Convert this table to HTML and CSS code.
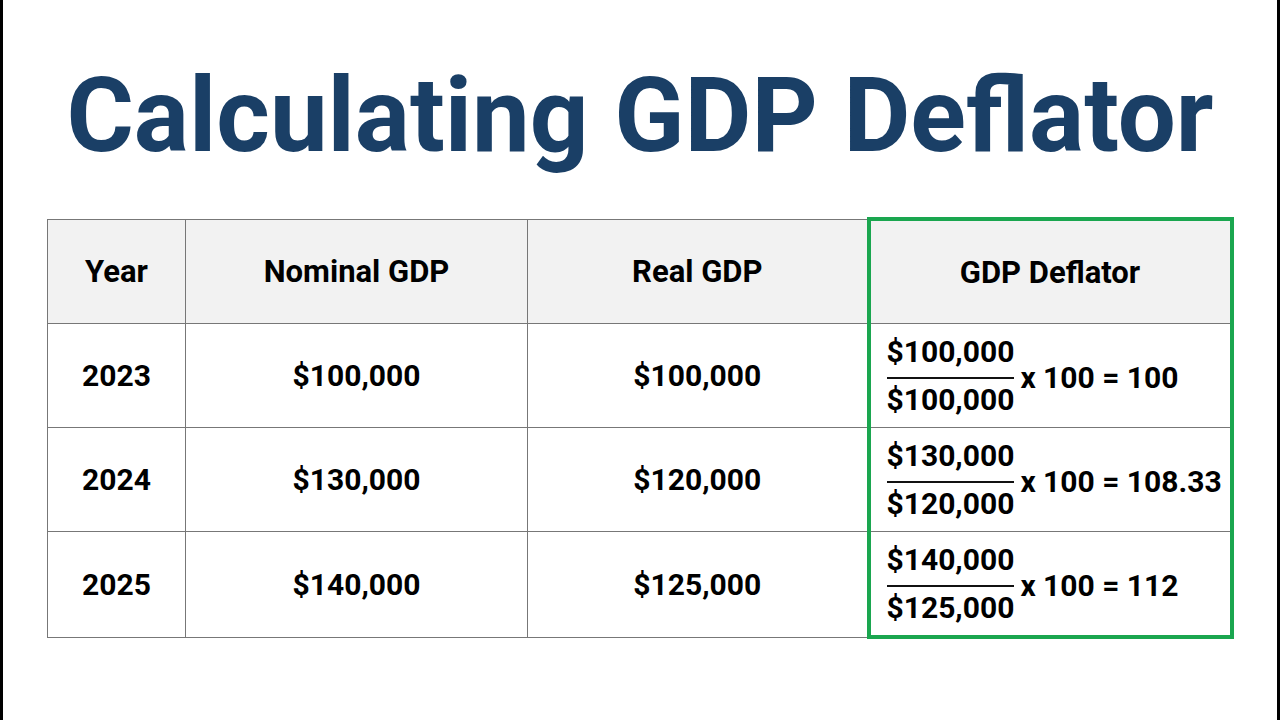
FILE: index.html
```html
<!DOCTYPE html>
<html>
<head>
<meta charset="utf-8">
<link rel="stylesheet" href="styles.css">
</head>
<body>
<div class="frame">
  <h1 class="title">Calculating GDP Deflator</h1>
  <table class="data">
    <colgroup>
      <col class="c-year"><col class="c-nom"><col class="c-real"><col class="c-defl">
    </colgroup>
    <thead>
      <tr><th>Year</th><th>Nominal GDP</th><th>Real GDP</th><th class="defl first">GDP Deflator</th></tr>
    </thead>
    <tbody>
      <tr><td>2023</td><td>$100,000</td><td>$100,000</td>
        <td class="defl"><div class="calc"><span class="frac"><span class="num">$100,000</span><span class="den">$100,000</span></span><span class="res">x 100 = 100</span></div></td></tr>
      <tr><td>2024</td><td>$130,000</td><td>$120,000</td>
        <td class="defl"><div class="calc"><span class="frac"><span class="num">$130,000</span><span class="den">$120,000</span></span><span class="res">x 100 = 108.33</span></div></td></tr>
      <tr><td>2025</td><td>$140,000</td><td>$125,000</td>
        <td class="defl last"><div class="calc"><span class="frac"><span class="num">$140,000</span><span class="den">$125,000</span></span><span class="res">x 100 = 112</span></div></td></tr>
    </tbody>
  </table>
</div>
</body>
</html>
```
FILE: styles.css
```css
html, body { margin: 0; padding: 0; background: #fff; }
.frame {
  width: 1280px; height: 720px; box-sizing: border-box;
  border-left: 3px solid #000; border-right: 3px solid #000;
  padding-top: 58px;
  font-family: Roboto, "Liberation Sans", sans-serif;
  overflow: hidden;
}
.title {
  margin: 0 0 43px 0;
  text-align: center;
  color: #1a3f66;
  font-size: 103px;
  font-weight: 700;
  line-height: 116px;
  white-space: nowrap;
}
.data {
  margin-left: 44px;
  border-collapse: collapse;
  table-layout: fixed;
  width: 1184px;
}
.c-year { width: 138px; }
.c-nom { width: 342px; }
.c-real { width: 341px; }
.c-defl { width: 363px; }
.data th, .data td {
  border: 1px solid #777;
  height: 103px;
  padding: 0;
  text-align: center;
  font-size: 30px;
  font-weight: 700;
  color: #000;
}
.data th { background: #f2f2f2; font-size: 31px; height: 102px; }
.data .defl { border-left: 4px solid #1aa64f; border-right: 4px solid #1aa64f; text-align: left; }
.data .defl.first { border-top: 4px solid #1aa64f; text-align: center; }
.data .defl.last { border-bottom: 4px solid #1aa64f; }
.calc { display: flex; align-items: center; padding-left: 16px; }
.frac { display: flex; flex-direction: column; align-items: center; line-height: 34px; }
.num { padding-bottom: 8px; border-bottom: 2px solid #111; }
.den { padding-top: 4px; }
.res { margin-left: 6px; margin-top: 4px; }
```
